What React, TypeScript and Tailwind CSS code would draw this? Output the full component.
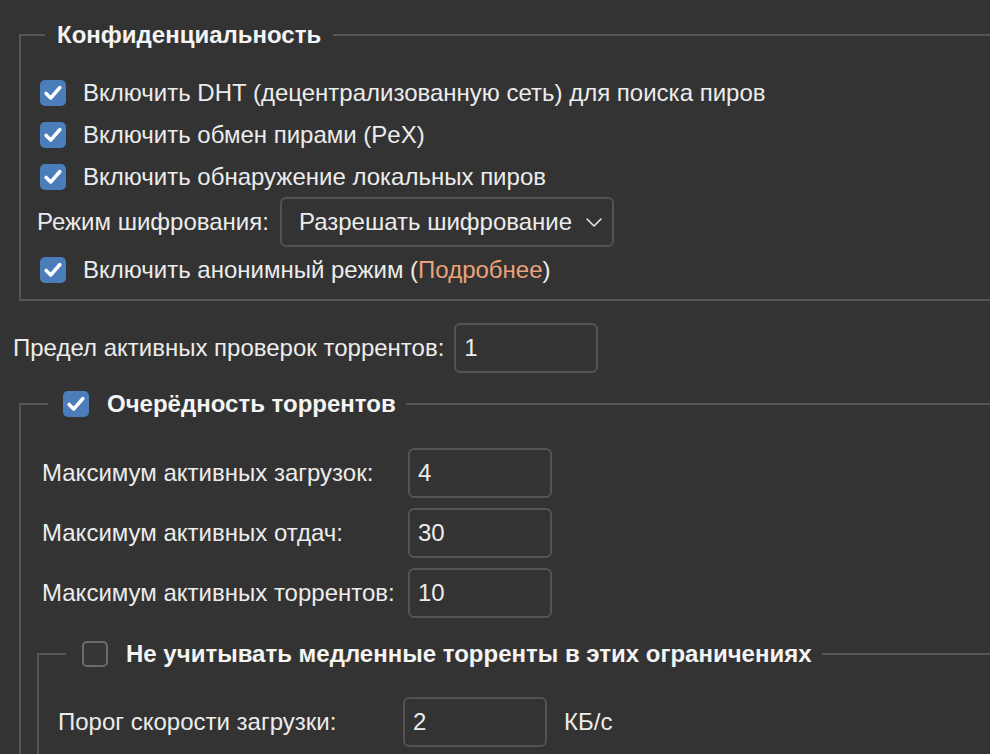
import { useState } from "react";

const font = { fontFamily: '"Liberation Sans", Arial, sans-serif' };

function Check({ checked, onChange }: { checked: boolean; onChange: () => void }) {
  return (
    <button
      type="button"
      onClick={onChange}
      className={
        "flex h-[26px] w-[26px] shrink-0 items-center justify-center rounded-[5px] " +
        (checked ? "bg-[#4b7dba]" : "border-2 border-[#6b6b6b] bg-[#363636]")
      }
    >
      {checked && (
        <svg viewBox="0 0 24 24" className="h-[22px] w-[22px]" fill="none">
          <path d="M4.5 12.5l5 5L19.5 6" stroke="#fff" strokeWidth="3.8" strokeLinecap="round" strokeLinejoin="round" />
        </svg>
      )}
    </button>
  );
}

function NumInput({ value }: { value: string }) {
  return (
    <input
      defaultValue={value}
      className="h-[50px] w-[144px] rounded-[6px] border-2 border-[#535353] bg-[#333333] px-[8px] text-[24px] text-[#ececec] outline-none"
    />
  );
}

export default function App() {
  const [dht, setDht] = useState(true);
  const [pex, setPex] = useState(true);
  const [lsd, setLsd] = useState(true);
  const [anon, setAnon] = useState(true);
  const [queue, setQueue] = useState(true);
  const [slow, setSlow] = useState(false);

  return (
    <div className="h-screen w-full overflow-hidden bg-[#333333] text-[24px] text-[#ececec]" style={font}>
      <div className="w-[1200px] pt-[21px]">
        {/* Конфиденциальность */}
        <fieldset className="ml-[19px] border-2 border-[#555555] pb-[5px] pl-[19px]">
          <legend className="ml-[5px] px-[12px] font-bold leading-[28px] text-[#f4f4f4]">
            Конфиденциальность
          </legend>
          <div className="mt-[23px]">
            <label className="flex h-[42px] items-center gap-[17px]">
              <Check checked={dht} onChange={() => setDht(!dht)} />
              <span>Включить DHT (децентрализованную сеть) для поиска пиров</span>
            </label>
            <label className="flex h-[42px] items-center gap-[17px]">
              <Check checked={pex} onChange={() => setPex(!pex)} />
              <span>Включить обмен пирами (PeX)</span>
            </label>
            <label className="flex h-[42px] items-center gap-[17px]">
              <Check checked={lsd} onChange={() => setLsd(!lsd)} />
              <span>Включить обнаружение локальных пиров</span>
            </label>
            <div className="-ml-[3px] flex h-[48px] items-center gap-[11px]">
              <span>Режим шифрования:</span>
              <div className="flex h-[50px] w-[334px] items-center justify-between rounded-[6px] border-2 border-[#535353] pl-[17px] pr-[8px]">
                <span>Разрешать шифрование</span>
                <svg viewBox="0 0 20 20" className="h-[20px] w-[20px]" fill="none">
                  <path d="M3 7l7 7 7-7" stroke="#e6e6e6" strokeWidth="1.6" strokeLinecap="round" strokeLinejoin="round" />
                </svg>
              </div>
            </div>
            <label className="flex h-[48px] items-center gap-[17px]">
              <Check checked={anon} onChange={() => setAnon(!anon)} />
              <span>
                Включить анонимный режим (<a className="text-[#eaa27a]">Подробнее</a>)
              </span>
            </label>
          </div>
        </fieldset>

        <div className="ml-[13px] mt-[22px] flex items-center gap-[10px]">
          <span>Предел активных проверок торрентов:</span>
          <NumInput value="1" />
        </div>

        {/* Очерёдность торрентов */}
        <fieldset className="ml-[19px] mt-[17px] border-2 border-[#555555] pl-[16px]">
          <legend className="ml-[11px] flex items-center gap-[18px] pl-[15px] pr-[10px] leading-[28px]">
            <Check checked={queue} onChange={() => setQueue(!queue)} />
            <span className="font-bold text-[#f4f4f4]">Очерёдность торрентов</span>
          </legend>
          <div className="ml-[5px] mt-[30px] grid grid-cols-[366px_144px] items-center gap-y-[10px]">
            <span>Максимум активных загрузок:</span>
            <NumInput value="4" />
            <span>Максимум активных отдач:</span>
            <NumInput value="30" />
            <span>Максимум активных торрентов:</span>
            <NumInput value="10" />
          </div>

          <fieldset className="mt-[22px] h-[200px] border-2 border-[#555555] pl-[19px]">
            <legend className="ml-[8px] flex items-center gap-[18px] pl-[16px] pr-[10px] leading-[28px]">
              <Check checked={slow} onChange={() => setSlow(!slow)} />
              <span className="font-bold text-[#f4f4f4]">Не учитывать медленные торренты в этих ограничениях</span>
            </legend>
            <div className="mt-[29px] flex items-center">
              <span className="w-[345px]">Порог скорости загрузки:</span>
              <NumInput value="2" />
              <span className="ml-[17px]">КБ/с</span>
            </div>
          </fieldset>
        </fieldset>
      </div>
    </div>
  );
}
